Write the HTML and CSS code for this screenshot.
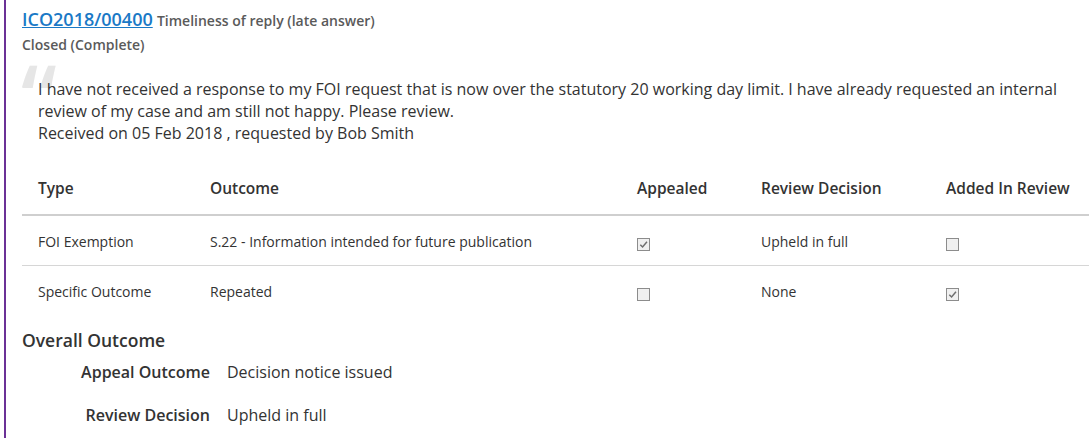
FILE: index.html
```html
<!DOCTYPE html>
<html lang="en">
<head>
  <meta charset="UTF-8" />
  <title>ICO2018/00400</title>
  <link rel="stylesheet" href="styles.css">
</head>
<body>
  <div class="case">
    <!-- Case header -->
    <div class="case-title">
      <a href="#" class="case-ref">ICO2018/00400</a>
      <span class="case-subject">Timeliness of reply (late answer)</span>
    </div>
    <div class="case-status">Closed (Complete)</div>

    <!-- Complaint text -->
    <blockquote class="complaint">
      <span class="quote-mark">&ldquo;</span>
      <p>I have not received a response to my FOI request that is now over the statutory 20 working day limit. I have already requested an internal review of my case and am still not happy. Please review.</p>
      <p>Received on 05 Feb 2018 , requested by Bob Smith</p>
    </blockquote>

    <!-- Outcomes -->
    <table class="outcomes">
      <colgroup>
        <col style="width:172px">
        <col style="width:427px">
        <col style="width:124px">
        <col style="width:185px">
        <col>
      </colgroup>
      <thead>
        <tr>
          <th>Type</th>
          <th>Outcome</th>
          <th>Appealed</th>
          <th>Review Decision</th>
          <th>Added In Review</th>
        </tr>
      </thead>
      <tbody>
        <tr>
          <td>FOI Exemption</td>
          <td>S.22 - Information intended for future publication</td>
          <td><span class="check is-checked"><svg viewBox="0 0 12 12"><path d="M2.5 6.2 L5 8.7 L9.8 3"/></svg></span></td>
          <td>Upheld in full</td>
          <td><span class="check"></span></td>
        </tr>
        <tr>
          <td>Specific Outcome</td>
          <td>Repeated</td>
          <td><span class="check"></span></td>
          <td>None</td>
          <td><span class="check is-checked"><svg viewBox="0 0 12 12"><path d="M2.5 6.2 L5 8.7 L9.8 3"/></svg></span></td>
        </tr>
      </tbody>
    </table>

    <!-- Overall outcome -->
    <h3 class="overall-title">Overall Outcome</h3>
    <dl class="overall">
      <dt>Appeal Outcome</dt>
      <dd>Decision notice issued</dd>
      <dt>Review Decision</dt>
      <dd>Upheld in full</dd>
    </dl>
  </div>
</body>
</html>
```

FILE: styles.css
```css
body {
  font-family: "Open Sans", "Noto Sans", sans-serif;
  color: #333;
  background: #fff;
  margin: 0;
}
.case {
  margin-left: 4px;
  border-left: 2px solid #6b3196;
  padding: 7px 0 20px 16px;
  min-height: 420px;
}
.case-title {
  line-height: 24px;
}
.case-ref {
  color: #1a79c6;
  font-size: 18px;
  font-weight: 600;
  text-decoration: underline;
}
.case-subject {
  color: #5a5a5a;
  font-size: 14px;
  font-weight: 600;
}
.case-status {
  color: #5a5a5a;
  font-size: 14px;
  font-weight: 600;
  line-height: 20px;
  margin-top: 2px;
}
.complaint {
  position: relative;
  margin: 23px 0 0;
  padding-left: 16px;
  font-size: 16px;
  line-height: 22px;
}
.complaint p {
  position: relative;
  margin: 0;
}
.quote-mark {
  position: absolute;
  left: -1px;
  top: -27px;
  font-size: 90px;
  font-weight: 600;
  line-height: 1;
  color: #e6e6e6;
}
.outcomes {
  width: 100%;
  border-collapse: collapse;
  table-layout: fixed;
  margin-top: 21px;
}
.outcomes th {
  text-align: left;
  white-space: nowrap;
  font-size: 15.5px;
  font-weight: 600;
  line-height: 22px;
  padding: 12px 16px 15px;
  border-bottom: 2px solid #cfcfcf;
}
.outcomes td {
  font-size: 14px;
  line-height: 20px;
  padding: 16px 16px 13px;
  border-bottom: 1px solid #d6d6d6;
  vertical-align: top;
}
.outcomes tr:last-child td {
  border-bottom: none;
}
.check {
  display: inline-block;
  width: 11px;
  height: 11px;
  border: 1px solid #8c8c8c;
  background: #f0f0f0;
  vertical-align: middle;
  margin-top: 3px;
}
.check svg {
  display: block;
  width: 11px;
  height: 11px;
  fill: none;
  stroke: #6e6e6e;
  stroke-width: 1.6;
}
.overall-title {
  font-size: 17.5px;
  font-weight: 600;
  margin: 13px 0 0;
  line-height: 24px;
}
.overall {
  display: grid;
  grid-template-columns: 188px 1fr;
  column-gap: 17px;
  row-gap: 21px;
  margin: 9px 0 0;
  font-size: 16px;
  line-height: 22px;
}
.overall dt {
  text-align: right;
  font-weight: 600;
}
.overall dd {
  margin: 0;
}
```
